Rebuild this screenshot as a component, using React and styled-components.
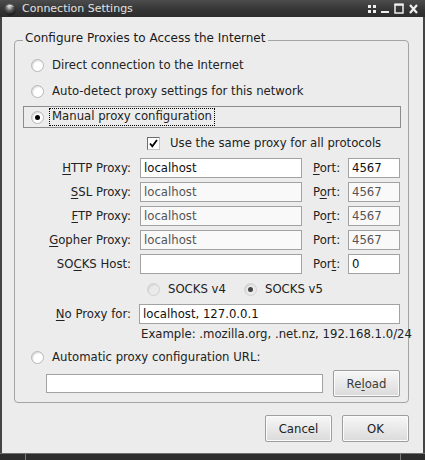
import React from "react";
import styled, { createGlobalStyle } from "styled-components";

const GlobalStyle = createGlobalStyle`
  html, body {
    margin: 0;
    padding: 0;
    background: #2e2e2e;
  }
  body {
    font-family: "DejaVu Sans", "Liberation Sans", sans-serif;
  }
`;

const Window = styled.div`
  width: 425px;
  height: 460px;
  display: flex;
  flex-direction: column;
  background: #ececec;
  font-size: 11.7px;
  color: #222;
  overflow: hidden;
`;

const TitleBar = styled.div`
  height: 17px;
  flex: none;
  display: flex;
  align-items: center;
  padding: 0 7px 0 3px;
  background: linear-gradient(#4c4c4c, #343434 60%, #2c2c2c);
  color: #e2e2e2;
`;

const TitleText = styled.span`
  margin-left: 5px;
  font-size: 11px;
  flex: 1;
`;

const TitleButtons = styled.div`
  display: flex;
  align-items: center;
  gap: 5px;
`;

const Body = styled.div`
  flex: 1;
  display: flex;
  flex-direction: column;
  border-left: 2px solid #454545;
  border-right: 2px solid #454545;
  padding: 14px 14px 0 12px;
`;

const Group = styled.fieldset`
  margin: 0;
  padding: 0 0 5px 0;
  border: 1px solid #a4a4a4;
  border-radius: 4px;
  display: flex;
  flex-direction: column;
  min-width: 0;
`;

const Legend = styled.legend`
  margin-left: 8px;
  padding: 0 3px 4px 2px;
  line-height: 14px;
  font-size: 12px;
  color: #1a1a1a;
`;

const RadioRow = styled.div`
  display: flex;
  align-items: center;
  height: 20px;
  margin-top: ${(p) => p.$top}px;
  padding-left: 16px;
`;

const SelectedRow = styled.div`
  display: flex;
  align-items: center;
  height: 22px;
  box-sizing: border-box;
  margin: 5px 7px 0 8px;
  padding-left: 7px;
  border: 1px solid #8c8c8c;
`;

const Radio = styled.span`
  width: 13px;
  height: 13px;
  box-sizing: border-box;
  border-radius: 50%;
  flex: none;
  display: flex;
  align-items: center;
  justify-content: center;
  border: 1px solid ${(p) => (p.$disabled ? "#d2d2d2" : "#b8b8b8")};
  background: ${(p) =>
    p.$disabled
      ? "#eaeaea"
      : "radial-gradient(circle at 60% 60%, #ffffff 45%, #e4e4e4 100%)"};
  box-shadow: inset 1px 1px 1px rgba(0, 0, 0, 0.1);
`;

const Dot = styled.span`
  width: 5px;
  height: 5px;
  border-radius: 50%;
  background: ${(p) => (p.$disabled ? "#444" : "#000")};
`;

const RadioLabel = styled.span`
  margin-left: ${(p) => p.$gap ?? 8}px;
  white-space: nowrap;
`;

const FocusLabel = styled.span`
  margin-left: 5px;
  padding: 1px 3px 2px 3px;
  outline: 1px dotted #000;
  outline-offset: -1px;
  line-height: 15px;
  white-space: nowrap;
`;

const CheckRow = styled.div`
  display: flex;
  align-items: center;
  height: 20px;
  margin-top: 5px;
  padding-left: 132px;
`;

const CheckBox = styled.span`
  width: 13px;
  height: 13px;
  box-sizing: border-box;
  flex: none;
  display: flex;
  align-items: center;
  justify-content: center;
  background: #fff;
  border: 1px solid;
  border-color: #6c6c6c #c4c4c4 #c4c4c4 #6c6c6c;
`;

const ProxyGrid = styled.div`
  display: grid;
  grid-template-columns: 116px 162px 28px 52px;
  column-gap: 9px;
  row-gap: 4px;
  grid-auto-rows: 20px;
  align-items: center;
  margin-top: 5px;
`;

const FieldLabel = styled.label`
  text-align: right;
  white-space: nowrap;
`;

const PortLabel = styled.label`
  margin-left: 2px;
  white-space: nowrap;
`;

const Mn = styled.span`
  text-decoration: underline;
  text-underline-offset: 2px;
`;

const Input = styled.div`
  height: ${(p) => p.$h ?? 20}px;
  box-sizing: border-box;
  border: 1px solid #a2a2a2;
  background: ${(p) => (p.$disabled ? "#f9f9f9" : "#ffffff")};
  color: ${(p) => (p.$disabled ? "#555" : "#111")};
  padding: 0 3px;
  display: flex;
  align-items: center;
  white-space: nowrap;
  overflow: hidden;
  width: ${(p) => (p.$w ? `${p.$w}px` : "auto")};
  flex: ${(p) => (p.$w ? "none" : "1")};
`;

const SocksRow = styled.div`
  display: flex;
  align-items: center;
  height: 20px;
  margin-top: 5px;
  padding-left: 132px;
`;

const SocksOption = styled.div`
  display: flex;
  align-items: center;
  width: 97px;
`;

const NoProxyGrid = styled.div`
  display: grid;
  grid-template-columns: 116px 261px;
  column-gap: 8px;
  align-items: center;
  margin-top: 5px;
`;

const Hint = styled.div`
  margin: 3px 0 0 126px;
  line-height: 14px;
  white-space: nowrap;
`;

const UrlRow = styled.div`
  display: flex;
  align-items: center;
  margin-top: 3px;
  padding-left: 31px;
  gap: 10px;
`;

const Button = styled.button`
  width: 67px;
  height: 27px;
  box-sizing: border-box;
  font: inherit;
  color: ${(p) => p.$tone ?? "#222"};
  border: 1px solid #9e9e9e;
  border-radius: 2px;
  background: linear-gradient(#f7f7f7, #e6e6e6 60%, #dadada);
  box-shadow: inset 0 0 0 1px #fbfbfb;
  padding: 0;
  flex: none;
`;

const ButtonRow = styled.div`
  display: flex;
  justify-content: flex-end;
  gap: 10px;
  margin-top: 12px;
`;

const BottomFrame = styled.div`
  height: 6px;
  flex: none;
  display: flex;
  background: #2c2c2c;
  border-top: 1px solid #6e6e6e;
`;

const FrameSegment = styled.div`
  width: ${(p) => (p.$w ? `${p.$w}px` : "auto")};
  flex: ${(p) => (p.$w ? "none" : "1")};
  border-left: ${(p) => (p.$first ? "none" : "1px solid #7a7a7a")};
`;

function AppIcon() {
  return (
    <svg width="14" height="14" viewBox="0 0 14 14">
      <defs>
        <radialGradient id="ball" cx="0.45" cy="0.3" r="0.7">
          <stop offset="0" stopColor="#d8d8d8" />
          <stop offset="0.45" stopColor="#5a5a5a" />
          <stop offset="1" stopColor="#111" />
        </radialGradient>
      </defs>
      <circle cx="7" cy="7.5" r="6" fill="url(#ball)" />
      <path d="M3 5 Q7 1 11 5 Q7 3.5 3 5Z" fill="#e8e8e8" />
    </svg>
  );
}

function WindowControls() {
  return (
    <TitleButtons>
      <svg width="8" height="8" viewBox="0 0 8 8">
        <rect x="0" y="0" width="3" height="3" fill="#eee" />
        <rect x="5" y="0" width="3" height="3" fill="#eee" />
        <rect x="0" y="5" width="3" height="3" fill="#eee" />
        <rect x="5" y="5" width="3" height="3" fill="#eee" />
      </svg>
      <svg width="8" height="11" viewBox="0 0 8 11">
        <rect x="0" y="8" width="8" height="2" fill="#eee" />
      </svg>
      <svg width="10" height="11" viewBox="0 0 10 11">
        <rect x="1" y="1.5" width="8" height="8.5" fill="none" stroke="#eee" strokeWidth="1.5" />
        <rect x="0.5" y="0.5" width="9" height="2.2" fill="#eee" />
      </svg>
      <svg width="9" height="10" viewBox="0 0 9 10">
        <path d="M1 1 L8 9 M8 1 L1 9" stroke="#eee" strokeWidth="2.2" />
      </svg>
    </TitleButtons>
  );
}

function Check() {
  return (
    <svg width="11" height="11" viewBox="0 0 11 11">
      <path d="M2 5.5 L4.3 8.3 L9 2" fill="none" stroke="#000" strokeWidth="1.8" />
    </svg>
  );
}

const proxies = [
  { label: ["H", "TTP Proxy:"], port: ["", "P", "ort:"], host: "localhost", num: "4567" },
  { label: ["S", "SL Proxy:"], port: ["P", "o", "rt:"], host: "localhost", num: "4567", disabled: true },
  { label: ["F", "TP Proxy:"], port: ["Po", "r", "t:"], host: "localhost", num: "4567", disabled: true },
  { label: ["G", "opher Proxy:"], port: ["Port:", "", ""], host: "localhost", num: "4567", disabled: true },
];

export default function App() {
  return (
    <>
      <GlobalStyle />
      <Window>
        <TitleBar>
          <AppIcon />
          <TitleText>Connection Settings</TitleText>
          <WindowControls />
        </TitleBar>
        <Body>
          <Group>
            <Legend>Configure Proxies to Access the Internet</Legend>
            <RadioRow $top={6}>
              <Radio />
              <RadioLabel>Direct connection to the Internet</RadioLabel>
            </RadioRow>
            <RadioRow $top={6}>
              <Radio />
              <RadioLabel>Auto-detect proxy settings for this network</RadioLabel>
            </RadioRow>
            <SelectedRow>
              <Radio>
                <Dot />
              </Radio>
              <FocusLabel>Manual proxy configuration</FocusLabel>
            </SelectedRow>
            <CheckRow>
              <CheckBox>
                <Check />
              </CheckBox>
              <RadioLabel $gap={10}>Use the same proxy for all protocols</RadioLabel>
            </CheckRow>
            <ProxyGrid>
              {proxies.map((p) => (
                <React.Fragment key={p.label[1]}>
                  <FieldLabel>
                    <Mn>{p.label[0]}</Mn>
                    {p.label[1]}
                  </FieldLabel>
                  <Input $disabled={p.disabled}>{p.host}</Input>
                  <PortLabel>
                    {p.port[0]}
                    {p.port[1] && <Mn>{p.port[1]}</Mn>}
                    {p.port[2]}
                  </PortLabel>
                  <Input $disabled={p.disabled}>{p.num}</Input>
                </React.Fragment>
              ))}
              <FieldLabel>
                SO<Mn>C</Mn>KS Host:
              </FieldLabel>
              <Input />
              <PortLabel>
                Por<Mn>t</Mn>:
              </PortLabel>
              <Input>0</Input>
            </ProxyGrid>
            <SocksRow>
              <SocksOption>
                <Radio $disabled />
                <RadioLabel>SOCKS v4</RadioLabel>
              </SocksOption>
              <SocksOption>
                <Radio $disabled>
                  <Dot $disabled />
                </Radio>
                <RadioLabel>SOCKS v5</RadioLabel>
              </SocksOption>
            </SocksRow>
            <NoProxyGrid>
              <FieldLabel>
                <Mn>N</Mn>o Proxy for:
              </FieldLabel>
              <Input>localhost, 127.0.0.1</Input>
            </NoProxyGrid>
            <Hint>Example: .mozilla.org, .net.nz, 192.168.1.0/24</Hint>
            <RadioRow $top={6}>
              <Radio />
              <RadioLabel>Automatic proxy configuration URL:</RadioLabel>
            </RadioRow>
            <UrlRow>
              <Input $w={277} $h={19} />
              <Button $tone="#3a3a3a">
                Re<Mn>l</Mn>oad
              </Button>
            </UrlRow>
          </Group>
          <ButtonRow>
            <Button>Cancel</Button>
            <Button>OK</Button>
          </ButtonRow>
        </Body>
        <BottomFrame>
          <FrameSegment $first $w={25} />
          <FrameSegment />
          <FrameSegment $w={24} />
        </BottomFrame>
      </Window>
    </>
  );
}
